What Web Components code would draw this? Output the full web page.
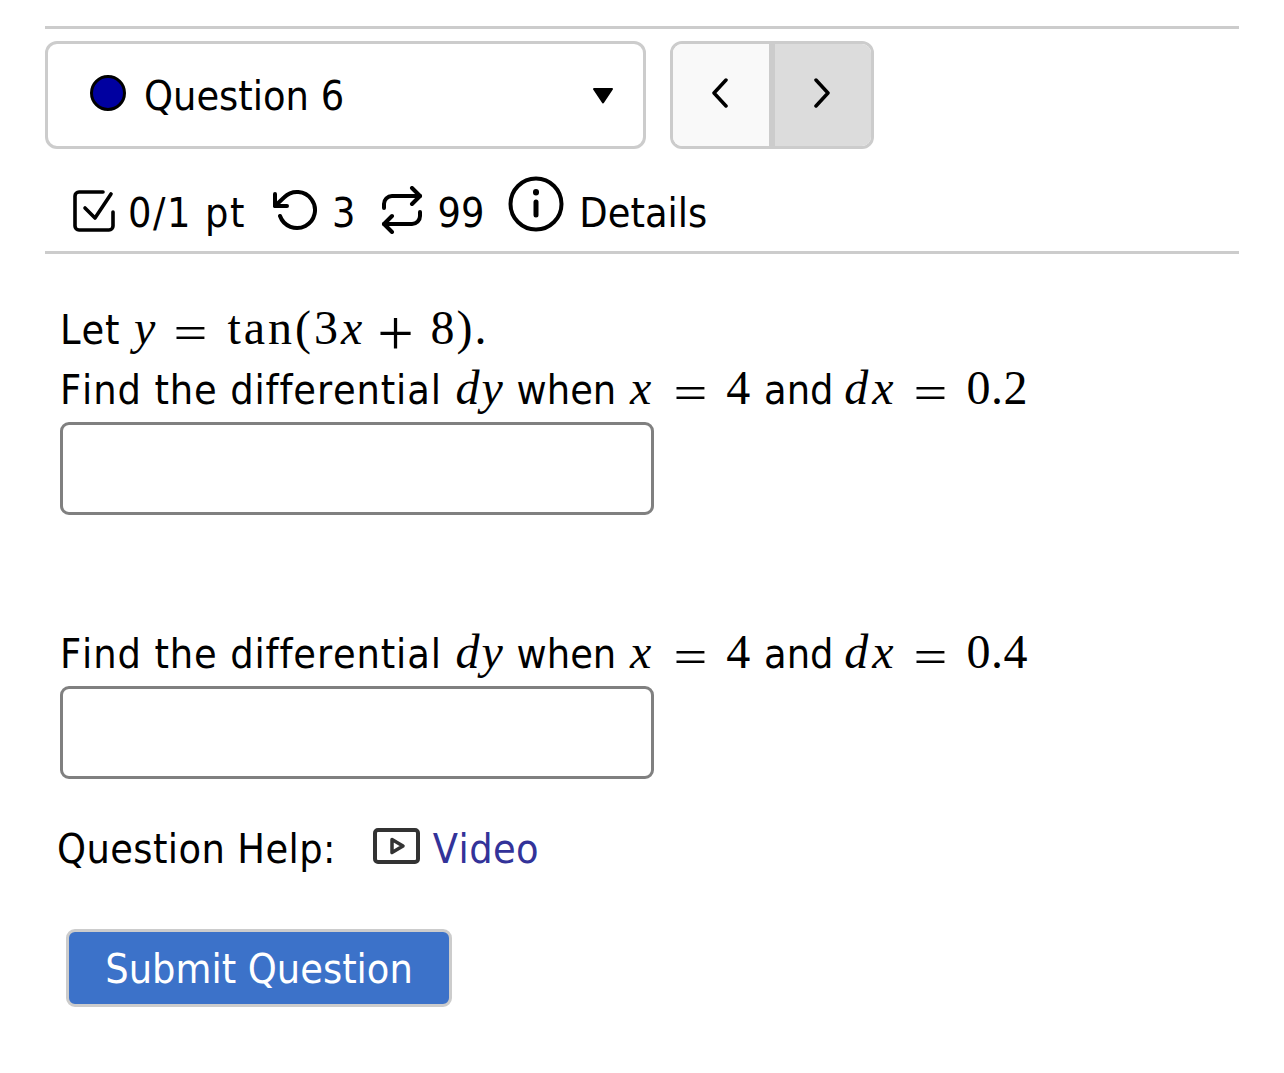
<!DOCTYPE html>
<html lang="en">
<head>
<meta charset="utf-8">
<title>Question 6</title>
<style>
  body {
    margin: 0; background: #fff; color: #000;
    font-family: "DejaVu Sans Condensed", "DejaVu Sans", sans-serif; font-stretch: condensed;
    font-variant-ligatures: none; font-kerning: none;
  }
</style>
</head>
<body>
<q-page>
  <q-nav label="Question 6"></q-nav>
  <q-meta></q-meta>
  <q-body>
    <q-line><q-wide>Let</q-wide> <q-math class="v">y</q-math><q-math class="op">=</q-math><q-math class="fn">tan(3<i>x</i></q-math><q-math class="op plus">+</q-math><q-math>8).</q-math></q-line>
    <q-line><q-wide>Find the differential</q-wide> <q-math class="v">dy</q-math> when <q-math class="v lone">x</q-math><q-math class="op">=</q-math><q-math>4</q-math> and <q-math class="v wide">dx</q-math><q-math class="op">=</q-math><q-math class="num">0.2</q-math></q-line>
    <q-answer></q-answer>
    <q-line class="second"><q-wide>Find the differential</q-wide> <q-math class="v">dy</q-math> when <q-math class="v lone">x</q-math><q-math class="op">=</q-math><q-math>4</q-math> and <q-math class="v wide">dx</q-math><q-math class="op">=</q-math><q-math class="num">0.4</q-math></q-line>
    <q-answer></q-answer>
    <q-help></q-help>
    <q-submit>Submit Question</q-submit>
  </q-body>
</q-page>
<script>
class QPage extends HTMLElement {
  constructor() {
    super();
    this.attachShadow({ mode: 'open' });
    this.shadowRoot.innerHTML = `
      <style>
        :host { display: block; margin: 26px 45px 0; border-top: 3px solid #ccc; font-size: 41px; }
      </style>
      <slot></slot>`;
  }
}

class QNav extends HTMLElement {
  constructor() {
    super();
    this.attachShadow({ mode: 'open' });
  }

  connectedCallback() {
    const label = this.getAttribute('label') || 'Question';
    this.shadowRoot.innerHTML = `
      <style>
        :host { display: flex; gap: 24px; margin-top: 12px; height: 108px; }
        .select {
          box-sizing: border-box; width: 601px; border: 3px solid #ccc; border-radius: 12px;
          display: flex; align-items: center; padding: 0 29px 0 42px;
        }
        .dot {
          box-sizing: border-box; width: 36px; height: 36px; border-radius: 50%;
          background: #0000a0; border: 3px solid #000; margin: -5px 18px 0 0;
        }
        .label { flex: 1; line-height: 1; padding-top: 2px; }
        .caret { width: 22px; height: 16px; margin-top: 1px; }
        .buttons {
          box-sizing: border-box; width: 204px; display: flex; border: 3px solid #ccc;
          border-radius: 12px; overflow: hidden;
        }
        .btn { box-sizing: border-box; display: flex; align-items: center; justify-content: center; padding-bottom: 5px; }
        .prev { flex: none; width: 102px; background: #f9f9f9; border-right: 6px solid #ccc; padding-right: 2px; }
        .next { flex: 1; background: #dcdcdc; padding-right: 3px; }
        .btn svg { width: 18px; height: 30px; }
      </style>
      <div class="select">
        <span class="dot"></span>
        <span class="label">${label}</span>
        <svg class="caret" viewBox="0 0 22 16"><path d="M2 1H20L11 14.5Z" fill="#000" stroke="#000" stroke-width="2" stroke-linejoin="round"/></svg>
      </div>
      <div class="buttons">
        <div class="btn prev"><svg viewBox="0 0 18 30"><path d="M15 2 3 15l12 13" fill="none" stroke="#000" stroke-width="3.5" stroke-linecap="round" stroke-linejoin="round"/></svg></div>
        <div class="btn next"><svg viewBox="0 0 18 30"><path d="M3 2l12 13L3 28" fill="none" stroke="#000" stroke-width="3.5" stroke-linecap="round" stroke-linejoin="round"/></svg></div>
      </div>`;
  }
}

class QMeta extends HTMLElement {
  constructor() {
    super();
    this.attachShadow({ mode: 'open' });
    const s = 'fill="none" stroke="#000" stroke-linecap="round" stroke-linejoin="round"';
    this.shadowRoot.innerHTML = `
      <style>
        :host {
          display: flex; align-items: flex-end; box-sizing: border-box; height: 105px;
          padding: 0 0 12px 27px; border-bottom: 3px solid #ccc; line-height: 52px;
        }
        svg { flex: none; display: block; }
        .pts { letter-spacing: 1.5px; }
      </style>
      <svg style="width:42px;height:42px;margin:0 13px 7px 1px" viewBox="0 0 42 42" ${s} stroke-width="3.6">
        <path d="M30 2H6a4 4 0 0 0-4 4v30a4 4 0 0 0 4 4h30a4 4 0 0 0 4-4V22"/><path d="M12 18l10 10L38 4"/>
      </svg>
      <span class="pts">0/1 pt</span>
      <svg style="width:48px;height:48px;margin:0 11px 5px 27px" viewBox="0 0 24 24" ${s} stroke-width="2">
        <path d="M1 4v6h6"/><path d="M3.51 15a9 9 0 1 0 2.13-9.36L1 10"/>
      </svg>
      <span>3</span>
      <svg style="width:48px;height:48px;margin:0 11px 5px 23px" viewBox="0 0 24 24" ${s} stroke-width="2">
        <path d="M17 1l4 4-4 4"/><path d="M3 11V9a4 4 0 0 1 4-4h14"/><path d="M7 23l-4-4 4-4"/><path d="M21 13v2a4 4 0 0 1-4 4H3"/>
      </svg>
      <span>99</span>
      <svg style="width:56px;height:56px;margin:0 15px 7px 24px" viewBox="0 0 56 56" ${s} stroke-width="4">
        <circle cx="28" cy="28" r="25.5"/><path d="M28 26v13" stroke-width="5"/><path d="M28 16v.5" stroke-width="6"/>
      </svg>
      <span>Details</span>`;
  }
}

class QBody extends HTMLElement {
  constructor() {
    super();
    this.attachShadow({ mode: 'open' });
    this.shadowRoot.innerHTML = `
      <style>
        :host { display: block; padding: 45px 0 0 15px; }
      </style>
      <slot></slot>`;
  }
}

class QLine extends HTMLElement {
  constructor() {
    super();
    this.attachShadow({ mode: 'open' });
    const second = this.classList.contains('second');
    this.shadowRoot.innerHTML = `
      <style>
        :host { display: block; height: 60px; line-height: 62px; white-space: nowrap; margin-top: ${second ? 108 : 0}px; }
      </style>
      <slot></slot>`;
  }
}

class QWide extends HTMLElement {
  constructor() {
    super();
    this.attachShadow({ mode: 'open' });
    this.shadowRoot.innerHTML = `
      <style>
        :host { display: inline; letter-spacing: .88px; }
      </style>
      <slot></slot>`;
  }
}

class QMath extends HTMLElement {
  constructor() {
    super();
    this.attachShadow({ mode: 'open' });
    const has = name => this.classList.contains(name);
    this.shadowRoot.innerHTML = `
      <style>
        :host {
          display: inline-block; font-family: "Liberation Serif", serif; font-size: 48px; line-height: 48px; letter-spacing: 2px;
          ${has('v') ? 'font-style: italic; margin-left: 2px;' : ''}
          ${has('lone') ? 'margin-right: 4px;' : ''}
          ${has('wide') ? 'letter-spacing: 4px; margin-left: -1px;' : ''}
          ${has('fn') ? 'letter-spacing: 3px; margin-left: 1px;' : ''}
          ${has('num') ? 'letter-spacing: .5px;' : ''}
          ${has('op') ? 'letter-spacing: 0; margin: 0 22px 0 20px; vertical-align: -5px; transform: scaleX(1.25);' : ''}
          ${has('plus') ? 'margin: 0 21px 0 17px; transform: scale(1.35);' : ''}
        }
      </style>
      <slot></slot>`;
  }
}

class QAnswer extends HTMLElement {
  constructor() {
    super();
    this.attachShadow({ mode: 'open' });
    this.shadowRoot.innerHTML = `
      <style>
        :host { display: block; width: 594px; }
        input {
          display: block; box-sizing: border-box; width: 100%; height: 93px; margin-top: 3px;
          border: 3px solid #808080; border-radius: 9px; background: #fff; outline: none;
        }
      </style>
      <input type="text" aria-label="answer">`;
  }
}

class QHelp extends HTMLElement {
  constructor() {
    super();
    this.attachShadow({ mode: 'open' });
    this.shadowRoot.innerHTML = `
      <style>
        :host { display: flex; align-items: center; height: 60px; margin: 40px 0 0 -3px; }
        .lbl { letter-spacing: .4px; }
        svg { width: 47px; height: 36px; margin: -6px 13px 0 37px; }
        a { color: #333399; text-decoration: none; letter-spacing: .4px; }
      </style>
      <span class="lbl">Question Help:</span>
      <svg viewBox="0 0 47 36">
        <rect x="2" y="2" width="43" height="32" rx="3" fill="none" stroke="#333" stroke-width="4"/>
        <path d="M19 11.5 30 18 19 24.5Z" fill="none" stroke="#333" stroke-width="3.5" stroke-linejoin="round"/>
      </svg>
      <a href="#">Video</a>`;
  }
}

class QSubmit extends HTMLElement {
  constructor() {
    super();
    this.attachShadow({ mode: 'open' });
    this.shadowRoot.innerHTML = `
      <style>
        :host { display: inline-block; margin: 50px 0 0 6px; }
        button {
          box-sizing: border-box; width: 386px; height: 78px; padding: 2px 0 0; border: 3px solid #ccc; border-radius: 9px;
          background: #3c72c9; color: #fff; font: inherit;
        }
      </style>
      <button type="button"><slot></slot></button>`;
  }
}

customElements.define('q-page', QPage);
customElements.define('q-nav', QNav);
customElements.define('q-meta', QMeta);
customElements.define('q-body', QBody);
customElements.define('q-line', QLine);
customElements.define('q-wide', QWide);
customElements.define('q-math', QMath);
customElements.define('q-answer', QAnswer);
customElements.define('q-help', QHelp);
customElements.define('q-submit', QSubmit);
</script>
</body>
</html>
